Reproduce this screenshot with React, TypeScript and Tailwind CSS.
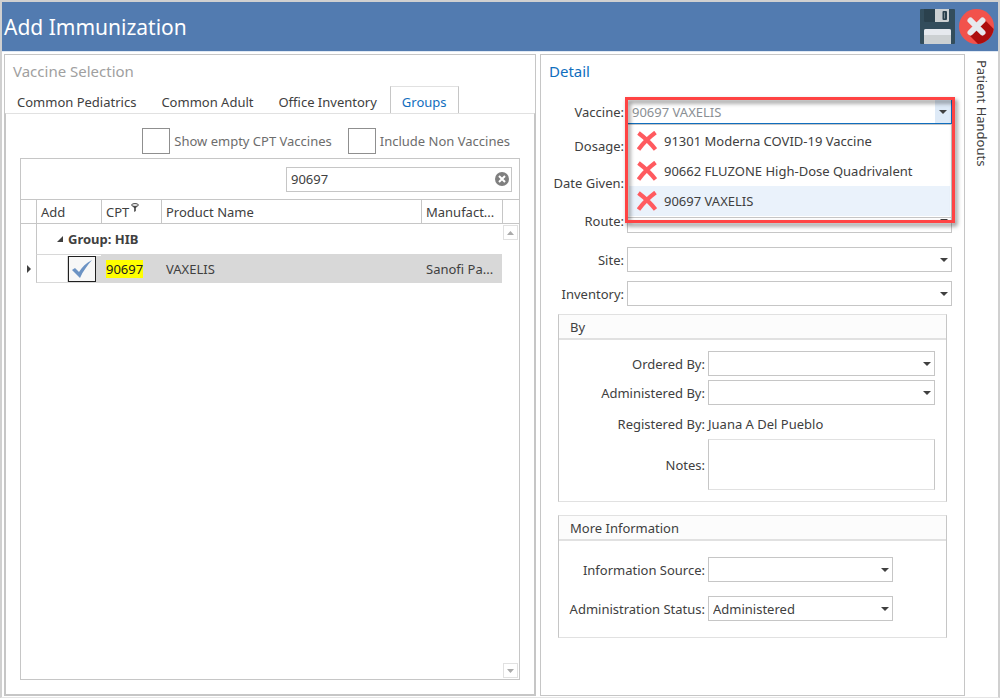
import { useState, type ReactNode } from "react";
import clsx from "clsx";

const tabs = ["Common Pediatrics", "Common Adult", "Office Inventory", "Groups"];

const vaccines = [
  "91301 Moderna COVID-19 Vaccine",
  "90662 FLUZONE High-Dose Quadrivalent",
  "90697 VAXELIS",
];

function SaveIcon() {
  return (
    <svg width="35" height="35" viewBox="0 0 35 35" aria-hidden="true">
      <path d="M1 0h33a1 1 0 0 1 1 1v33a1 1 0 0 1-1 1H1a1 1 0 0 1-1-1V1a1 1 0 0 1 1-1z" fill="#334d5c" />
      <path d="M4 0h12v13H5.500A1.500 1.500 0 0 1 4 11.500z" fill="#2b414d" />
      <path d="M15 0h14v11.500a1.500 1.500 0 0 1-1.500 1.500H15z" fill="#ccd0d2" />
      <rect x="22.500" y="2" width="4.500" height="9" rx="1" fill="#2b414d" />
      <rect x="24" y="3.500" width="1" height="6" fill="#7b8990" />
      <path d="M4 35V22a2 2 0 0 1 2-2h23a2 2 0 0 1 2 2v13z" fill="#ccd0d2" />
      <path d="M4 26v-4a2 2 0 0 1 2-2h23a2 2 0 0 1 2 2v4z" fill="#e6e9ee" />
    </svg>
  );
}

function CloseIcon() {
  return (
    <svg width="35" height="35" viewBox="0 0 35 35" aria-hidden="true">
      <circle cx="17.500" cy="17.500" r="17.500" fill="#f2524c" />
      <path d="M24.500 9.500L34.700 20A17.500 17.500 0 0 1 19 35l-8.500-8.500z" fill="#ad0e0e" />
      <path d="M11.500 11.500l12 12M23.500 11.500l-12 12" stroke="#e6e9ee" strokeWidth="6" strokeLinecap="round" />
    </svg>
  );
}

function CrossIcon() {
  return (
    <svg width="20" height="20" viewBox="0 0 20 20" aria-hidden="true">
      <path d="M1.500 2c6 4.500 12 10 17 16.500M18.500 1.500c-6 4.500-12 10-17 17" stroke="#ff5a5f" strokeWidth="4.200" fill="none" />
    </svg>
  );
}

function Caret() {
  return (
    <svg
      width="8"
      height="4"
      viewBox="0 0 8 4"
      className="pointer-events-none absolute top-1/2 right-1 -translate-y-1/2"
      aria-hidden="true"
    >
      <path d="M0 0h8L4 4z" fill="#404040" />
    </svg>
  );
}

function Select({ id, options = [""] }: { id: string; options?: string[] }) {
  return (
    <div className="relative h-[25px] w-full">
      <select id={id} className="h-full w-full appearance-none border border-[#c6c6c6] bg-white px-1 outline-none">
        {options.map((option) => (
          <option key={option}>{option}</option>
        ))}
      </select>
      <Caret />
    </div>
  );
}

function Field({
  id,
  label,
  labelClass = "w-[75px]",
  className,
  children,
}: {
  id: string;
  label: string;
  labelClass?: string;
  className?: string;
  children: ReactNode;
}) {
  return (
    <div className={clsx("flex items-center gap-[3px]", className)}>
      <label htmlFor={id} className={clsx("shrink-0 text-right whitespace-nowrap", labelClass)}>
        {label}:
      </label>
      {children}
    </div>
  );
}

function Group({ title, className, children }: { title: string; className?: string; children: ReactNode }) {
  return (
    <section className={clsx("mx-[17px] border border-x-[#c6c6c6] border-y-[#e1e1e1]", className)}>
      <h3 className="h-[25px] border-b-2 border-[#e1e1e1] bg-[#fcfcfc] pl-[11px] leading-[25px]">{title}</h3>
      {children}
    </section>
  );
}

function Header() {
  return (
    <header className="flex h-[49px] items-center justify-between bg-[#527bb0] pr-1 pl-[2px]">
      <h1 className="text-[21px] text-white">Add Immunization</h1>
      <div className="flex gap-1">
        <button type="button" aria-label="Save">
          <SaveIcon />
        </button>
        <button type="button" aria-label="Close">
          <CloseIcon />
        </button>
      </div>
    </header>
  );
}

function ScrollBar() {
  return (
    <div className="absolute top-[66px] right-px bottom-px flex flex-col justify-between">
      <button type="button" aria-label="Scroll up" className="flex size-[15px] items-center justify-center border border-[#e1e1e1]">
        <svg width="7" height="4" viewBox="0 0 7 4">
          <path d="M0 4h7L3.500 0z" fill="#ababab" />
        </svg>
      </button>
      <button type="button" aria-label="Scroll down" className="flex size-[15px] items-center justify-center border border-[#e1e1e1]">
        <svg width="7" height="4" viewBox="0 0 7 4">
          <path d="M0 0h7L3.500 4z" fill="#ababab" />
        </svg>
      </button>
    </div>
  );
}

function VaccineGrid() {
  const [search, setSearch] = useState("90697");
  const [added, setAdded] = useState(true);

  return (
    <div className="relative mx-[14px] mt-1 mb-[14px] flex-1 border border-[#c6c6c6]">
      <div className="flex h-10 items-center justify-end pr-[7px]">
        <div className="relative h-[25px] w-[226px]">
          <input
            type="text"
            aria-label="Search vaccines"
            value={search}
            onChange={(e) => setSearch(e.target.value)}
            className="h-full w-full border border-[#c6c6c6] pr-6 pl-1 outline-none"
          />
          <button type="button" aria-label="Clear search" onClick={() => setSearch("")} className="absolute top-[5px] right-[3px]">
            <svg width="14" height="14" viewBox="0 0 14 14">
              <circle cx="7" cy="7" r="7" fill="#7f7f7f" />
              <path d="M4 4l6 6M10 4l-6 6" stroke="#fff" strokeWidth="2" />
            </svg>
          </button>
        </div>
      </div>

      <table className="w-full table-fixed border-separate border-spacing-0 text-left">
        <colgroup>
          <col className="w-[15px]" />
          <col className="w-[65px]" />
          <col className="w-[60px]" />
          <col />
          <col className="w-[81px]" />
          <col className="w-[17px]" />
        </colgroup>
        <thead>
          <tr className="h-[25px] *:border-y *:border-[#c6c6c6] *:p-0 *:font-normal">
            <th />
            <th className="border-l pl-1!">Add</th>
            <th className="border-l">
              <span className="flex items-center gap-[2px] pl-1">
                CPT
                <svg width="8" height="9" viewBox="0 0 8 9" className="mb-[9px]" aria-hidden="true">
                  <ellipse cx="4" cy="2" rx="3.400" ry="1.400" fill="#fff" stroke="#404040" />
                  <path d="M.8 2.500L3.200 5v4l1.600-1V5l2.400-2.500C6 3.800 2 3.800.8 2.500z" fill="#404040" />
                </svg>
              </span>
            </th>
            <th className="border-l pl-1!">Product Name</th>
            <th className="border-l pl-1!">Manufact...</th>
            <th className="border-l" />
          </tr>
        </thead>
        <tbody>
          <tr className="h-[31px]">
            <td />
            <td colSpan={4} className="border-b border-l border-b-[#d8d8d8] border-l-[#c6c6c6] p-0 pl-5 font-bold">
              <span className="flex items-center gap-[5px]">
                <svg width="6" height="6" viewBox="0 0 6 6" aria-hidden="true">
                  <path d="M6 0v6H0z" fill="#404040" />
                </svg>
                Group: HIB
              </span>
            </td>
            <td />
          </tr>
          <tr className="h-7 *:p-0">
            <td>
              <svg width="4" height="8" viewBox="0 0 4 8" className="ml-[6px]" aria-hidden="true">
                <path d="M0 0v8l4-4z" fill="#404040" />
              </svg>
            </td>
            <td className="border-b border-l border-b-[#d8d8d8] border-l-[#c6c6c6]">
              <span className="ml-[30px] flex bg-[#d8d8d8] pl-px">
                <span className="relative h-[26px] w-7">
                  <input
                    type="checkbox"
                    aria-label="Add VAXELIS"
                    checked={added}
                    onChange={() => setAdded(!added)}
                    className="block h-full w-full appearance-none border border-[#202020] bg-[#f7f7f7]"
                  />
                  {added && (
                    <svg width="20" height="18" viewBox="0 0 20 18" className="pointer-events-none absolute top-1 left-1">
                      <path d="M0 10l3-2 4 4C10 7 14 3 20 0 15 6 11 11 8 18z" fill="#6c93c4" />
                    </svg>
                  )}
                </span>
              </span>
            </td>
            <td className="bg-[#d8d8d8]">
              <mark className="ml-[5px] bg-[#ffff00] text-[#202020]">90697</mark>
            </td>
            <td className="bg-[#d8d8d8] pl-[5px]!">VAXELIS</td>
            <td className="bg-[#d8d8d8] pl-[5px]!">Sanofi Pa...</td>
            <td />
          </tr>
        </tbody>
      </table>
      <ScrollBar />
    </div>
  );
}

function VaccineSelection() {
  const [active, setActive] = useState("Groups");

  return (
    <section className="flex min-w-0 flex-col border border-[#c6c6c6]">
      <h2 className="mt-[6px] pl-2 text-[15px] leading-5 text-[#a0a0a0]">Vaccine Selection</h2>
      <div className="mt-[5px] flex gap-px" role="tablist">
        {tabs.map((tab) => (
          <button
            key={tab}
            type="button"
            role="tab"
            aria-selected={tab === active}
            onClick={() => setActive(tab)}
            className={clsx(
              "h-[27px] border-x border-t px-[11px] pt-[3px] whitespace-nowrap",
              tab === active
                ? "relative -mb-px border-x-[#c6c6c6] border-t-[#e1e1e1] bg-white text-[#106ebe]"
                : "border-transparent",
            )}
          >
            {tab}
          </button>
        ))}
      </div>
      <div className="flex flex-1 flex-col border border-x-[#c6c6c6] border-t-[#e1e1e1] border-b-[#c6c6c6]">
        <div className="mt-[14px] flex justify-end gap-4 pr-6 text-[#6d6d6d]">
          <label className="flex items-center gap-1 whitespace-nowrap">
            <input type="checkbox" className="h-[26px] w-7 appearance-none border border-[#8f8f8f]" />
            Show empty CPT Vaccines
          </label>
          <label className="flex items-center gap-1 whitespace-nowrap">
            <input type="checkbox" className="h-[26px] w-7 appearance-none border border-[#8f8f8f]" />
            Include Non Vaccines
          </label>
        </div>
        <VaccineGrid />
      </div>
    </section>
  );
}

function VaccineCombo() {
  const [value, setValue] = useState("90697 VAXELIS");

  return (
    <div className="relative h-[25px] w-full">
      <div className="relative h-full border border-[#106ebe] bg-white">
        <input
          id="vaccine"
          type="text"
          role="combobox"
          aria-expanded="true"
          aria-controls="vaccine-list"
          value={value}
          onChange={(e) => setValue(e.target.value)}
          className="h-full w-full pl-1 text-[#8a8f94] outline-none"
        />
        <span className="absolute inset-y-0 right-0 w-4 bg-[#deeaf7]" />
        <Caret />
      </div>
      <ul id="vaccine-list" role="listbox" className="absolute inset-x-0 top-[25px] z-10 border border-[#c6c6c6] bg-white p-px">
        {vaccines.map((name) => (
          <li key={name} role="option" aria-selected={name === value}>
            <button
              type="button"
              onClick={() => setValue(name)}
              className={clsx("flex h-[30px] w-full items-center gap-[7px] pl-2 text-left whitespace-nowrap", name === value && "bg-[#eaf2fb]")}
            >
              <CrossIcon />
              {name}
            </button>
          </li>
        ))}
      </ul>
      <div className="pointer-events-none absolute -top-[2px] -right-[3px] -left-[2px] z-20 h-[126px] border-[3px] border-[#ff4343] drop-shadow-[2px_3px_2px_rgba(0,0,0,0.5)]" />
    </div>
  );
}

function Detail() {
  return (
    <section className="border border-[#c6c6c6]">
      <h2 className="mt-[6px] pl-2 text-[15px] leading-5 text-[#106ebe]">Detail</h2>
      <div className="mt-[18px] pr-3 pl-2">
        <Field id="vaccine" label="Vaccine">
          <VaccineCombo />
        </Field>
        <Field id="dosage" label="Dosage" className="mt-[9px]">
          <input id="dosage" type="text" className="h-[25px] w-full border border-[#c6c6c6] px-1" />
        </Field>
        <Field id="date-given" label="Date Given" className="mt-3">
          <input id="date-given" type="text" className="h-[25px] w-full border border-[#c6c6c6] px-1" />
        </Field>
        <Field id="route" label="Route" className="mt-[13px]">
          <Select id="route" />
        </Field>
        <Field id="site" label="Site" className="mt-[14px]">
          <Select id="site" />
        </Field>
        <Field id="inventory" label="Inventory" className="mt-[9px]">
          <Select id="inventory" />
        </Field>
      </div>

      <Group title="By" className="mt-2">
        <div className="pt-[11px] pr-[11px] pb-[11px]">
          <Field id="ordered-by" label="Ordered By" labelClass="w-[146px]">
            <Select id="ordered-by" />
          </Field>
          <Field id="administered-by" label="Administered By" labelClass="w-[146px]" className="mt-1">
            <Select id="administered-by" />
          </Field>
          <Field id="registered-by" label="Registered By" labelClass="w-[146px]" className="mt-[9px] mb-[5px]">
            <output id="registered-by">Juana A Del Pueblo</output>
          </Field>
          <Field id="notes" label="Notes" labelClass="w-[146px]">
            <textarea
              id="notes"
              className="h-[51px] w-full resize-none border border-x-[#c6c6c6] border-y-[#e1e1e1] px-1 outline-none"
            />
          </Field>
        </div>
      </Group>

      <Group title="More Information" className="mt-[13px]">
        <div className="pt-4 pr-[53px] pb-4">
          <Field id="information-source" label="Information Source" labelClass="w-[146px]">
            <Select id="information-source" />
          </Field>
          <Field id="administration-status" label="Administration Status" labelClass="w-[146px]" className="mt-[14px]">
            <Select id="administration-status" options={["Administered"]} />
          </Field>
        </div>
      </Group>
    </section>
  );
}

export default function App() {
  return (
    <div className="flex min-h-screen flex-col border-2 border-b border-[#d0d0d0] border-b-[#e5e5e5] bg-white font-['Noto_Sans',sans-serif] text-[13px] leading-5 text-[#404040]">
      <Header />
      <main className="mb-px grid flex-1 grid-cols-[minmax(0,1fr)_425px_33px] border-t border-[#dfe8f3] pl-[2px]">
        <div className="mt-[2px] mr-1 flex *:flex-1">
          <VaccineSelection />
        </div>
        <div className="mt-[2px] flex *:flex-1">
          <Detail />
        </div>
        <aside className="flex items-start justify-center pt-2">
          <button type="button" className="leading-4 [writing-mode:vertical-rl]">
            Patient Handouts
          </button>
        </aside>
      </main>
    </div>
  );
}
